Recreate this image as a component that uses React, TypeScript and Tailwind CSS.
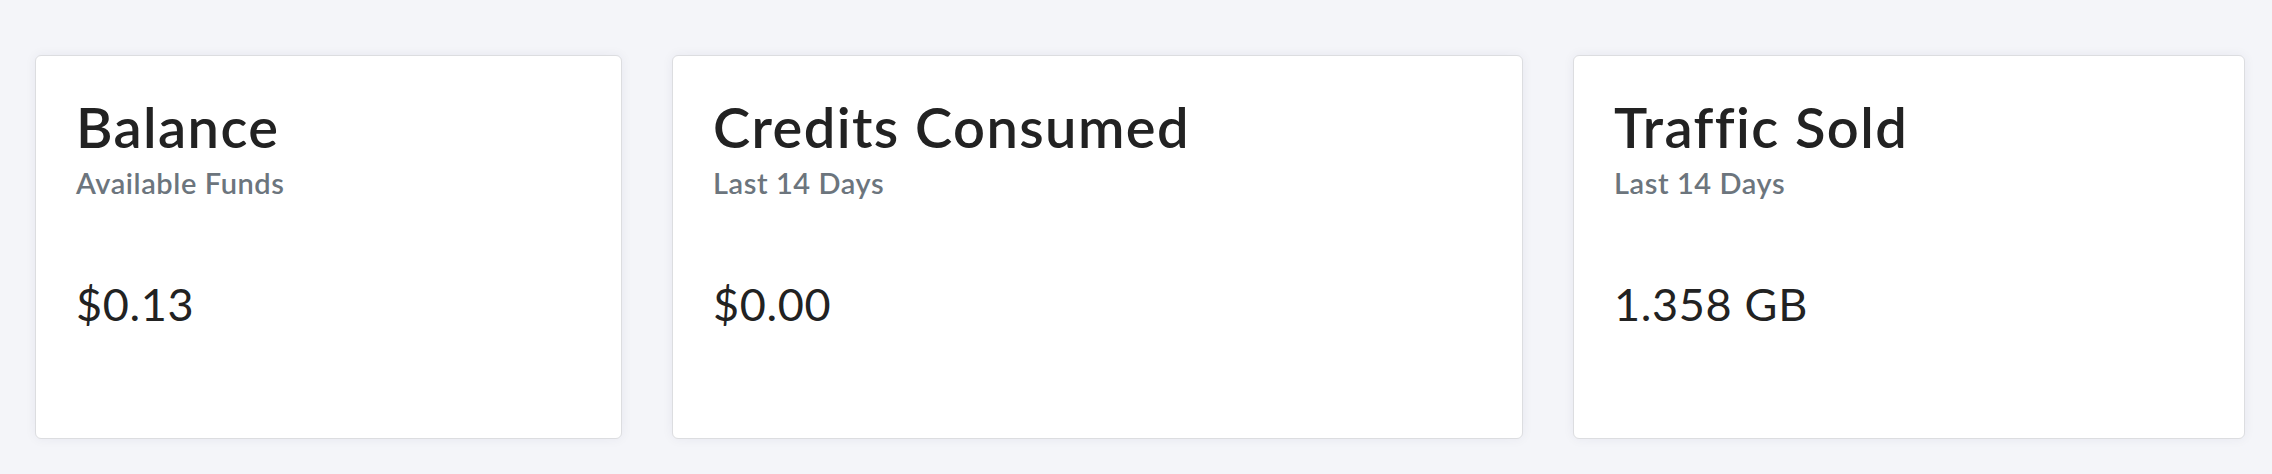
const cards = [
  { title: 'Balance', sub: 'Available Funds', value: '$0.13', w: 'w-[587px]' },
  { title: 'Credits Consumed', sub: 'Last 14 Days', value: '$0.00', w: 'w-[851px]' },
  { title: 'Traffic Sold', sub: 'Last 14 Days', value: '1.358 GB', w: 'w-[672px]' },
];

export default function App() {
  return (
    <div className="h-[474px] w-[2272px] bg-[#f4f5f9] pl-[35px] pt-[55px] font-['Lato',sans-serif] text-[#222222]">
      <div className="flex gap-[50px]">
        {cards.map(c => (
          <div
            key={c.title}
            className={`${c.w} h-[384px] shrink-0 rounded-[6px] border border-[#dcdde0] bg-white px-10 pt-[43px] shadow-[0_0_12px_rgba(30,40,80,0.06)]`}
          >
            <div className="text-[56px] font-semibold leading-[56px] tracking-[0.025em]">{c.title}</div>
            <div className="mt-[13px] text-[29px] font-semibold leading-[29px] tracking-[0.02em] text-[#6c757d]">{c.sub}</div>
            <div className="mt-[85px] text-[45px] leading-[45px] tracking-[0.015em]">{c.value}</div>
          </div>
        ))}
      </div>
    </div>
  );
}
